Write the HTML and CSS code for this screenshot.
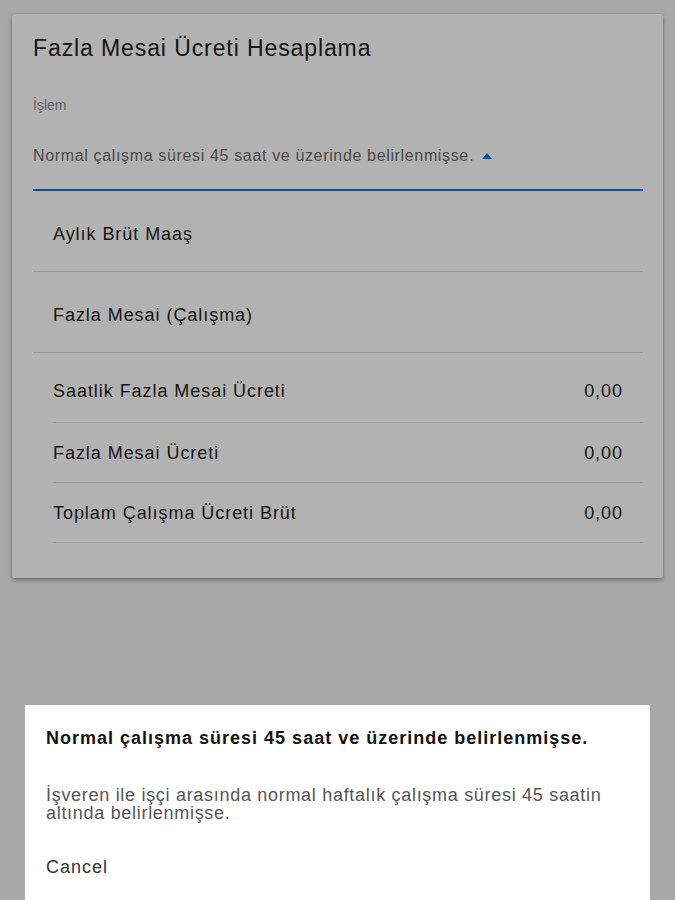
FILE: index.html
```html
<!DOCTYPE html>
<html lang="tr">
<head>
<meta charset="utf-8">
<title>Fazla Mesai Ücreti Hesaplama</title>
<link rel="stylesheet" href="styles.css">
</head>
<body>
<main class="page">
  <section class="card">
    <h1 class="card-title">Fazla Mesai Ücreti Hesaplama</h1>
    <div class="field">
      <div class="field-label">İşlem</div>
      <div class="field-select">
        <span class="field-value">Normal çalışma süresi 45 saat ve üzerinde belirlenmişse.</span>
        <span class="caret"></span>
      </div>
    </div>
    <div class="input-row">Aylık Brüt Maaş</div>
    <div class="input-row">Fazla Mesai (Çalışma)</div>
    <div class="results">
      <div class="result-row first"><span>Saatlik Fazla Mesai Ücreti</span><span>0,00</span></div>
      <div class="result-row"><span>Fazla Mesai Ücreti</span><span>0,00</span></div>
      <div class="result-row"><span>Toplam Çalışma Ücreti Brüt</span><span>0,00</span></div>
    </div>
  </section>
</main>
<div class="overlay"></div>
<div class="sheet">
  <div class="sheet-title">Normal çalışma süresi 45 saat ve üzerinde belirlenmişse.</div>
  <div class="sheet-option">İşveren ile işçi arasında normal haftalık çalışma süresi 45 saatin altında belirlenmişse.</div>
  <div class="sheet-cancel">Cancel</div>
</div>
</body>
</html>
```
FILE: styles.css
```css
html, body {
  margin: 0;
  padding: 0;
  height: 100%;
}
body {
  background: #f1f1f1;
  font-family: "Liberation Sans", Arial, sans-serif;
  color: #1e1e1e;
  overflow: hidden;
}
.page {
  padding: 14px 12px;
}
.card {
  background: #ffffff;
  border-radius: 3px;
  box-shadow: 0 2px 4px rgba(0,0,0,0.35), 0 0 2px rgba(0,0,0,0.12);
  padding: 20px 20px 35px 21px;
}
.card-title {
  margin: 0;
  font-size: 23px;
  font-weight: normal;
  line-height: 28px;
  letter-spacing: 0.9px;
  color: #212121;
}
.field {
  margin-top: 35px;
}
.field-label {
  font-size: 14px;
  line-height: 16px;
  color: #8f8f8f;
}
.field-select {
  display: flex;
  align-items: center;
  gap: 8px;
  height: 78px;
  padding-top: 10px;
  box-sizing: border-box;
  border-bottom: 2px solid #1f6fe0;
}
.field-value {
  font-size: 16px;
  letter-spacing: 0.65px;
  color: #6a6a6a;
}
.caret {
  width: 0;
  height: 0;
  border-left: 5px solid transparent;
  border-right: 5px solid transparent;
  border-bottom: 6px solid #1f6fe0;
}
.input-row {
  height: 81px;
  box-sizing: border-box;
  padding: 32px 20px 0;
  font-size: 18px;
  line-height: 22px;
  letter-spacing: 0.95px;
  border-bottom: 1px solid #dcdcdc;
}
.results {
  margin-left: 20px;
}
.result-row {
  display: flex;
  justify-content: space-between;
  height: 60px;
  box-sizing: border-box;
  padding: 19px 20px 0 0;
  font-size: 18px;
  line-height: 22px;
  letter-spacing: 0.95px;
  border-bottom: 1px solid #e4e4e4;
}
.result-row.first {
  height: 70px;
  padding-top: 27px;
}
.overlay {
  position: fixed;
  inset: 0;
  background: rgba(0,0,0,0.3);
}
.sheet {
  position: fixed;
  left: 25px;
  right: 25px;
  bottom: 0;
  top: 705px;
  background: #ffffff;
  padding: 22px 21px 0;
  box-sizing: border-box;
}
.sheet-title {
  font-size: 18px;
  font-weight: bold;
  line-height: 22px;
  letter-spacing: 1px;
  color: #111;
}
.sheet-option {
  margin-top: 37px;
  font-size: 18px;
  line-height: 18px;
  letter-spacing: 0.7px;
  color: #555;
}
.sheet-cancel {
  margin-top: 35px;
  font-size: 18px;
  line-height: 20px;
  letter-spacing: 1px;
  color: #333;
}
```
